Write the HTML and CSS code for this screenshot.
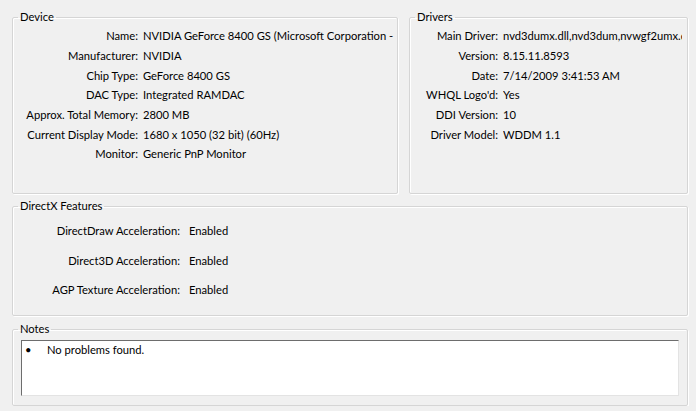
FILE: index.html
```html
<!DOCTYPE html>
<html>
<head>
<meta charset="utf-8">
<link rel="stylesheet" href="styles.css">
</head>
<body>
<div class="top">
  <fieldset class="group device">
    <legend>Device</legend>
    <div class="rows">
      <span class="lbl">Name:</span><span class="val">NVIDIA GeForce 8400 GS (Microsoft Corporation -</span>
      <span class="lbl">Manufacturer:</span><span class="val">NVIDIA</span>
      <span class="lbl">Chip Type:</span><span class="val">GeForce 8400 GS</span>
      <span class="lbl">DAC Type:</span><span class="val">Integrated RAMDAC</span>
      <span class="lbl">Approx. Total Memory:</span><span class="val">2800 MB</span>
      <span class="lbl">Current Display Mode:</span><span class="val">1680 x 1050 (32 bit) (60Hz)</span>
      <span class="lbl">Monitor:</span><span class="val">Generic PnP Monitor</span>
    </div>
  </fieldset>
  <fieldset class="group drivers">
    <legend>Drivers</legend>
    <div class="rows">
      <span class="lbl">Main Driver:</span><span class="val">nvd3dumx.dll,nvd3dum,nvwgf2umx.dll</span>
      <span class="lbl">Version:</span><span class="val">8.15.11.8593</span>
      <span class="lbl">Date:</span><span class="val">7/14/2009 3:41:53 AM</span>
      <span class="lbl">WHQL Logo'd:</span><span class="val">Yes</span>
      <span class="lbl">DDI Version:</span><span class="val">10</span>
      <span class="lbl">Driver Model:</span><span class="val">WDDM 1.1</span>
    </div>
  </fieldset>
</div>
<fieldset class="group directx">
  <legend>DirectX Features</legend>
  <div class="rows">
    <span class="lbl">DirectDraw Acceleration:</span><span class="val">Enabled</span>
    <span class="lbl">Direct3D Acceleration:</span><span class="val">Enabled</span>
    <span class="lbl">AGP Texture Acceleration:</span><span class="val">Enabled</span>
  </div>
</fieldset>
<fieldset class="group notes">
  <legend>Notes</legend>
  <div class="notebox">
    <div class="note"><span class="bullet">•</span><span>No problems found.</span></div>
  </div>
</fieldset>
</body>
</html>
```
FILE: styles.css
```css
html, body {
  margin: 0;
  background: #f0f0f0;
}
body {
  padding: 10px 8px 0 12px;
  font-family: Lato, "Noto Sans", sans-serif;
  font-size: 11.2px;
  color: #000;
  width: 676px;
}
.top {
  display: grid;
  grid-template-columns: 386px 279px;
  column-gap: 11px;
  height: 184px;
}
.group {
  margin: 0;
  padding: 0;
  border: 1px solid #d5d5d5;
  border-radius: 2px;
  box-shadow: inset 1px 1px 0 #fff, 1px 1px 0 #fff;
  min-width: 0;
  box-sizing: border-box;
}
.group legend {
  padding: 0 2px;
  margin-left: 5px;
  line-height: 14px;
}
.rows {
  display: grid;
  grid-auto-rows: 19.67px;
  align-items: center;
  white-space: nowrap;
}
.lbl { text-align: right; }
.val { overflow: hidden; }
.device .rows {
  padding-top: 2px;
  grid-template-columns: 125px 1fr;
  column-gap: 5px;
  padding-right: 1px;
}
.drivers .rows {
  padding-top: 2px;
  grid-template-columns: 88px 1fr;
  column-gap: 5px;
  padding-right: 5px;
}
.directx {
  margin-top: 5px;
  height: 117px;
}
.directx .rows {
  padding-top: 3px;
  grid-auto-rows: 29.5px;
  grid-template-columns: 167px 1fr;
  column-gap: 9px;
}
.notes {
  margin-top: 6px;
  height: 84px;
}
.notebox {
  margin: 4px 8px 0 8px;
  height: 56px;
  background: #fff;
  border-top: 1px solid #6d6d6d;
  border-left: 1px solid #6d6d6d;
  border-right: 1px solid #e3e3e3;
  border-bottom: 1px solid #e3e3e3;
  box-sizing: border-box;
}
.note {
  display: flex;
  padding: 1px 0 0 3px;
  line-height: 15px;
}
.bullet {
  width: 22px;
}
```
